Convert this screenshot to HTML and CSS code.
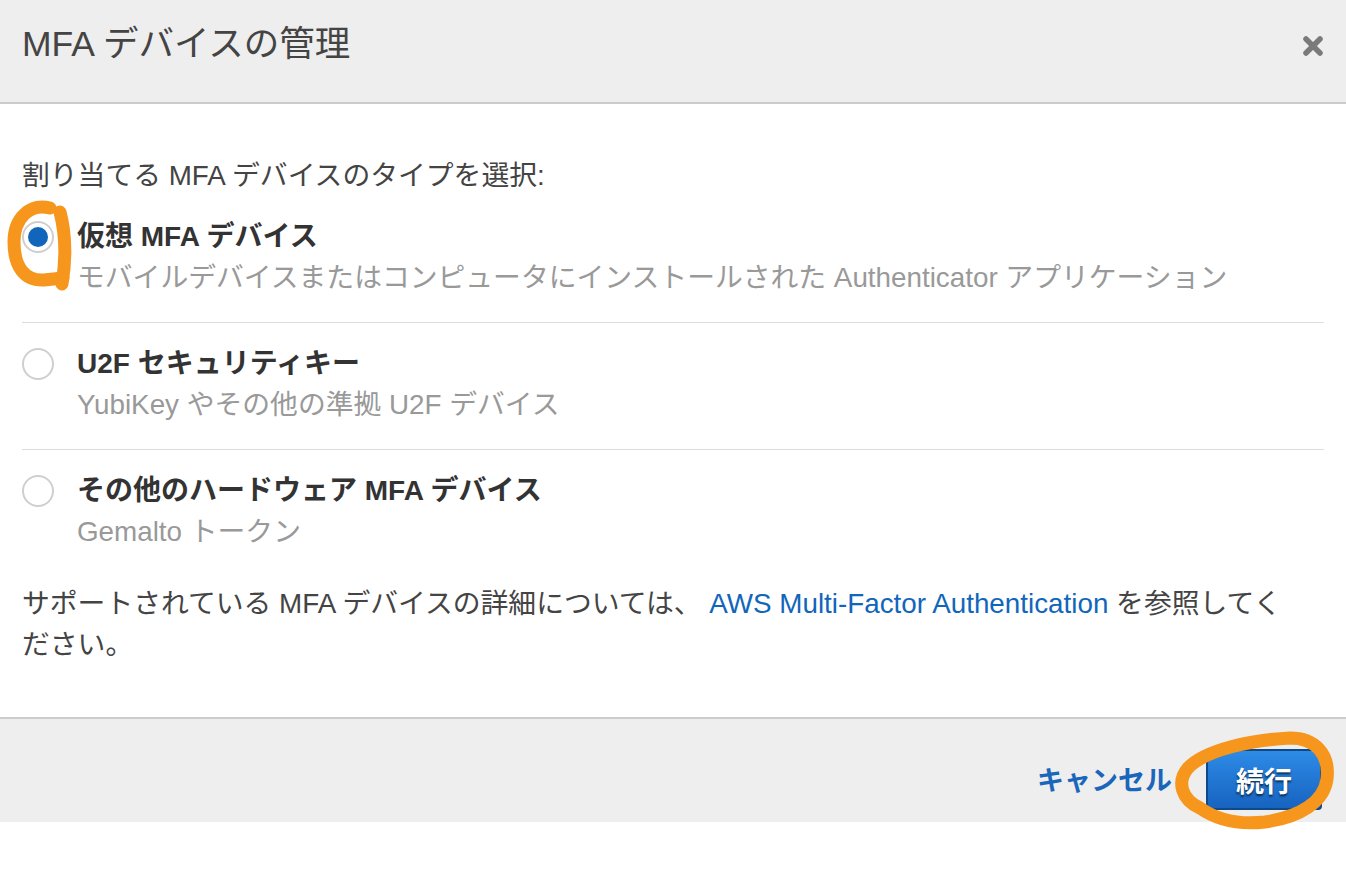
FILE: index.html
```html
<!DOCTYPE html>
<html lang="ja">
<head>
<meta charset="utf-8">
<title>MFA デバイスの管理</title>
<link rel="stylesheet" href="styles.css">
</head>
<body>
<div class="dialog">
  <header class="head">
    <h1 class="title">MFA デバイスの管理</h1>
    <button class="close" aria-label="閉じる">
      <svg width="22" height="22" viewBox="0 0 22 22"><path d="M4 4 L18 18 M18 4 L4 18" stroke="#7a7a7a" stroke-width="5.5" stroke-linecap="round"/></svg>
    </button>
  </header>
  <main class="body">
    <p class="prompt">割り当てる MFA デバイスのタイプを選択:</p>
    <div class="options">
      <label class="option">
        <span class="radio checked"><span class="dot"></span></span>
        <span class="otext">
          <span class="otitle">仮想 MFA デバイス</span>
          <span class="osub">モバイルデバイスまたはコンピュータにインストールされた Authenticator アプリケーション</span>
        </span>
      </label>
      <label class="option">
        <span class="radio"></span>
        <span class="otext">
          <span class="otitle">U2F セキュリティキー</span>
          <span class="osub">YubiKey やその他の準拠 U2F デバイス</span>
        </span>
      </label>
      <label class="option">
        <span class="radio"></span>
        <span class="otext">
          <span class="otitle">その他のハードウェア MFA デバイス</span>
          <span class="osub">Gemalto トークン</span>
        </span>
      </label>
    </div>
    <p class="note">サポートされている MFA デバイスの詳細については、 <a class="link" href="#">AWS Multi-Factor Authentication</a> を参照してください。</p>
  </main>
  <footer class="foot">
    <a class="cancel" href="#">キャンセル</a>
    <button class="primary">続行</button>
  </footer>
</div>
<svg class="mark" width="1346" height="870" viewBox="0 0 1346 870">
  <g fill="none" stroke="#f7961c" stroke-width="13" stroke-linecap="round" stroke-linejoin="round">
    <path d="M50 208 C30 203 14 218 14 242 C14 266 24 281 44 280 L63 278"/>
    <path d="M60 212 C66 235 66 260 62 284"/>
    <path d="M1200 808 C1182 800 1176 782 1188 768 C1205 750 1250 740 1290 738 C1315 738 1330 754 1327 779 C1324 802 1300 817 1265 822 C1238 825 1217 820 1200 808 Z"/>
  </g>
</svg>
</body>
</html>
```

FILE: styles.css
```css
* { box-sizing: border-box; }
html, body { margin: 0; padding: 0; background: #fff; }
body {
  font-family: "Liberation Sans", "Noto Sans CJK JP", sans-serif;
  color: #444;
  width: 1346px;
  height: 870px;
  overflow: hidden;
  position: relative;
}
.dialog { width: 1346px; }
.head {
  height: 104px;
  background: #eeeeee;
  border-bottom: 2px solid #cccccc;
  display: flex;
  align-items: center;
  justify-content: space-between;
  padding: 0 22px 14px 22px;
}
.title {
  margin: 0;
  font-size: 35.5px;
  font-weight: normal;
  color: #444;
  line-height: 42px;
}
.close {
  border: 0;
  background: transparent;
  padding: 0;
  width: 22px;
  height: 22px;
  display: flex;
  margin-top: 4px;
}
.body {
  padding: 51px 22px 52px 22px;
  background: #fff;
}
.prompt {
  margin: 0;
  font-size: 27.8px;
  line-height: 41px;
  color: #444;
}
.options { display: flex; flex-direction: column; }
.option {
  display: flex;
  gap: 23px;
  padding: 20px 0 24px 0;
  border-bottom: 1px solid #dddddd;
}
.option:last-child { border-bottom: 0; padding-bottom: 31px; }
.radio {
  flex: none;
  width: 32px;
  height: 32px;
  border-radius: 50%;
  border: 2px solid #cfcfcf;
  background: #fff;
  margin-top: 5px;
  display: flex;
  align-items: center;
  justify-content: center;
}
.dot {
  width: 20px;
  height: 20px;
  border-radius: 50%;
  background: #1166bb;
}
.otext { display: flex; flex-direction: column; }
.otitle {
  font-size: 28px;
  font-weight: bold;
  line-height: 42px;
  color: #333;
}
.osub {
  font-size: 27.8px;
  line-height: 40px;
  color: #999;
}
.note {
  margin: 0;
  padding-right: 30px;
  font-size: 27.8px;
  line-height: 41px;
  color: #444;
}
.link { color: #1166bb; text-decoration: none; }
.foot {
  height: 105px;
  background: #eeeeee;
  border-top: 2px solid #cccccc;
  display: flex;
  align-items: center;
  justify-content: flex-end;
  gap: 34px;
  padding: 16px 24px 0 22px;
}
.cancel {
  color: #1a66bb;
  font-weight: bold;
  font-size: 27px;
  text-decoration: none;
}
.primary {
  width: 116px;
  height: 61px;
  border: 2px solid #0e4a8a;
  border-radius: 4px;
  background: linear-gradient(#2d8be6, #1763c0);
  color: #fff;
  font-family: "Liberation Sans", "Noto Sans CJK JP", sans-serif;
  font-weight: bold;
  font-size: 28px;
  text-shadow: 0 2px 2px rgba(0,0,0,0.6);
  padding: 0;
  margin-top: 2px;
}
.mark { position: absolute; left: 0; top: 0; pointer-events: none; }
```
